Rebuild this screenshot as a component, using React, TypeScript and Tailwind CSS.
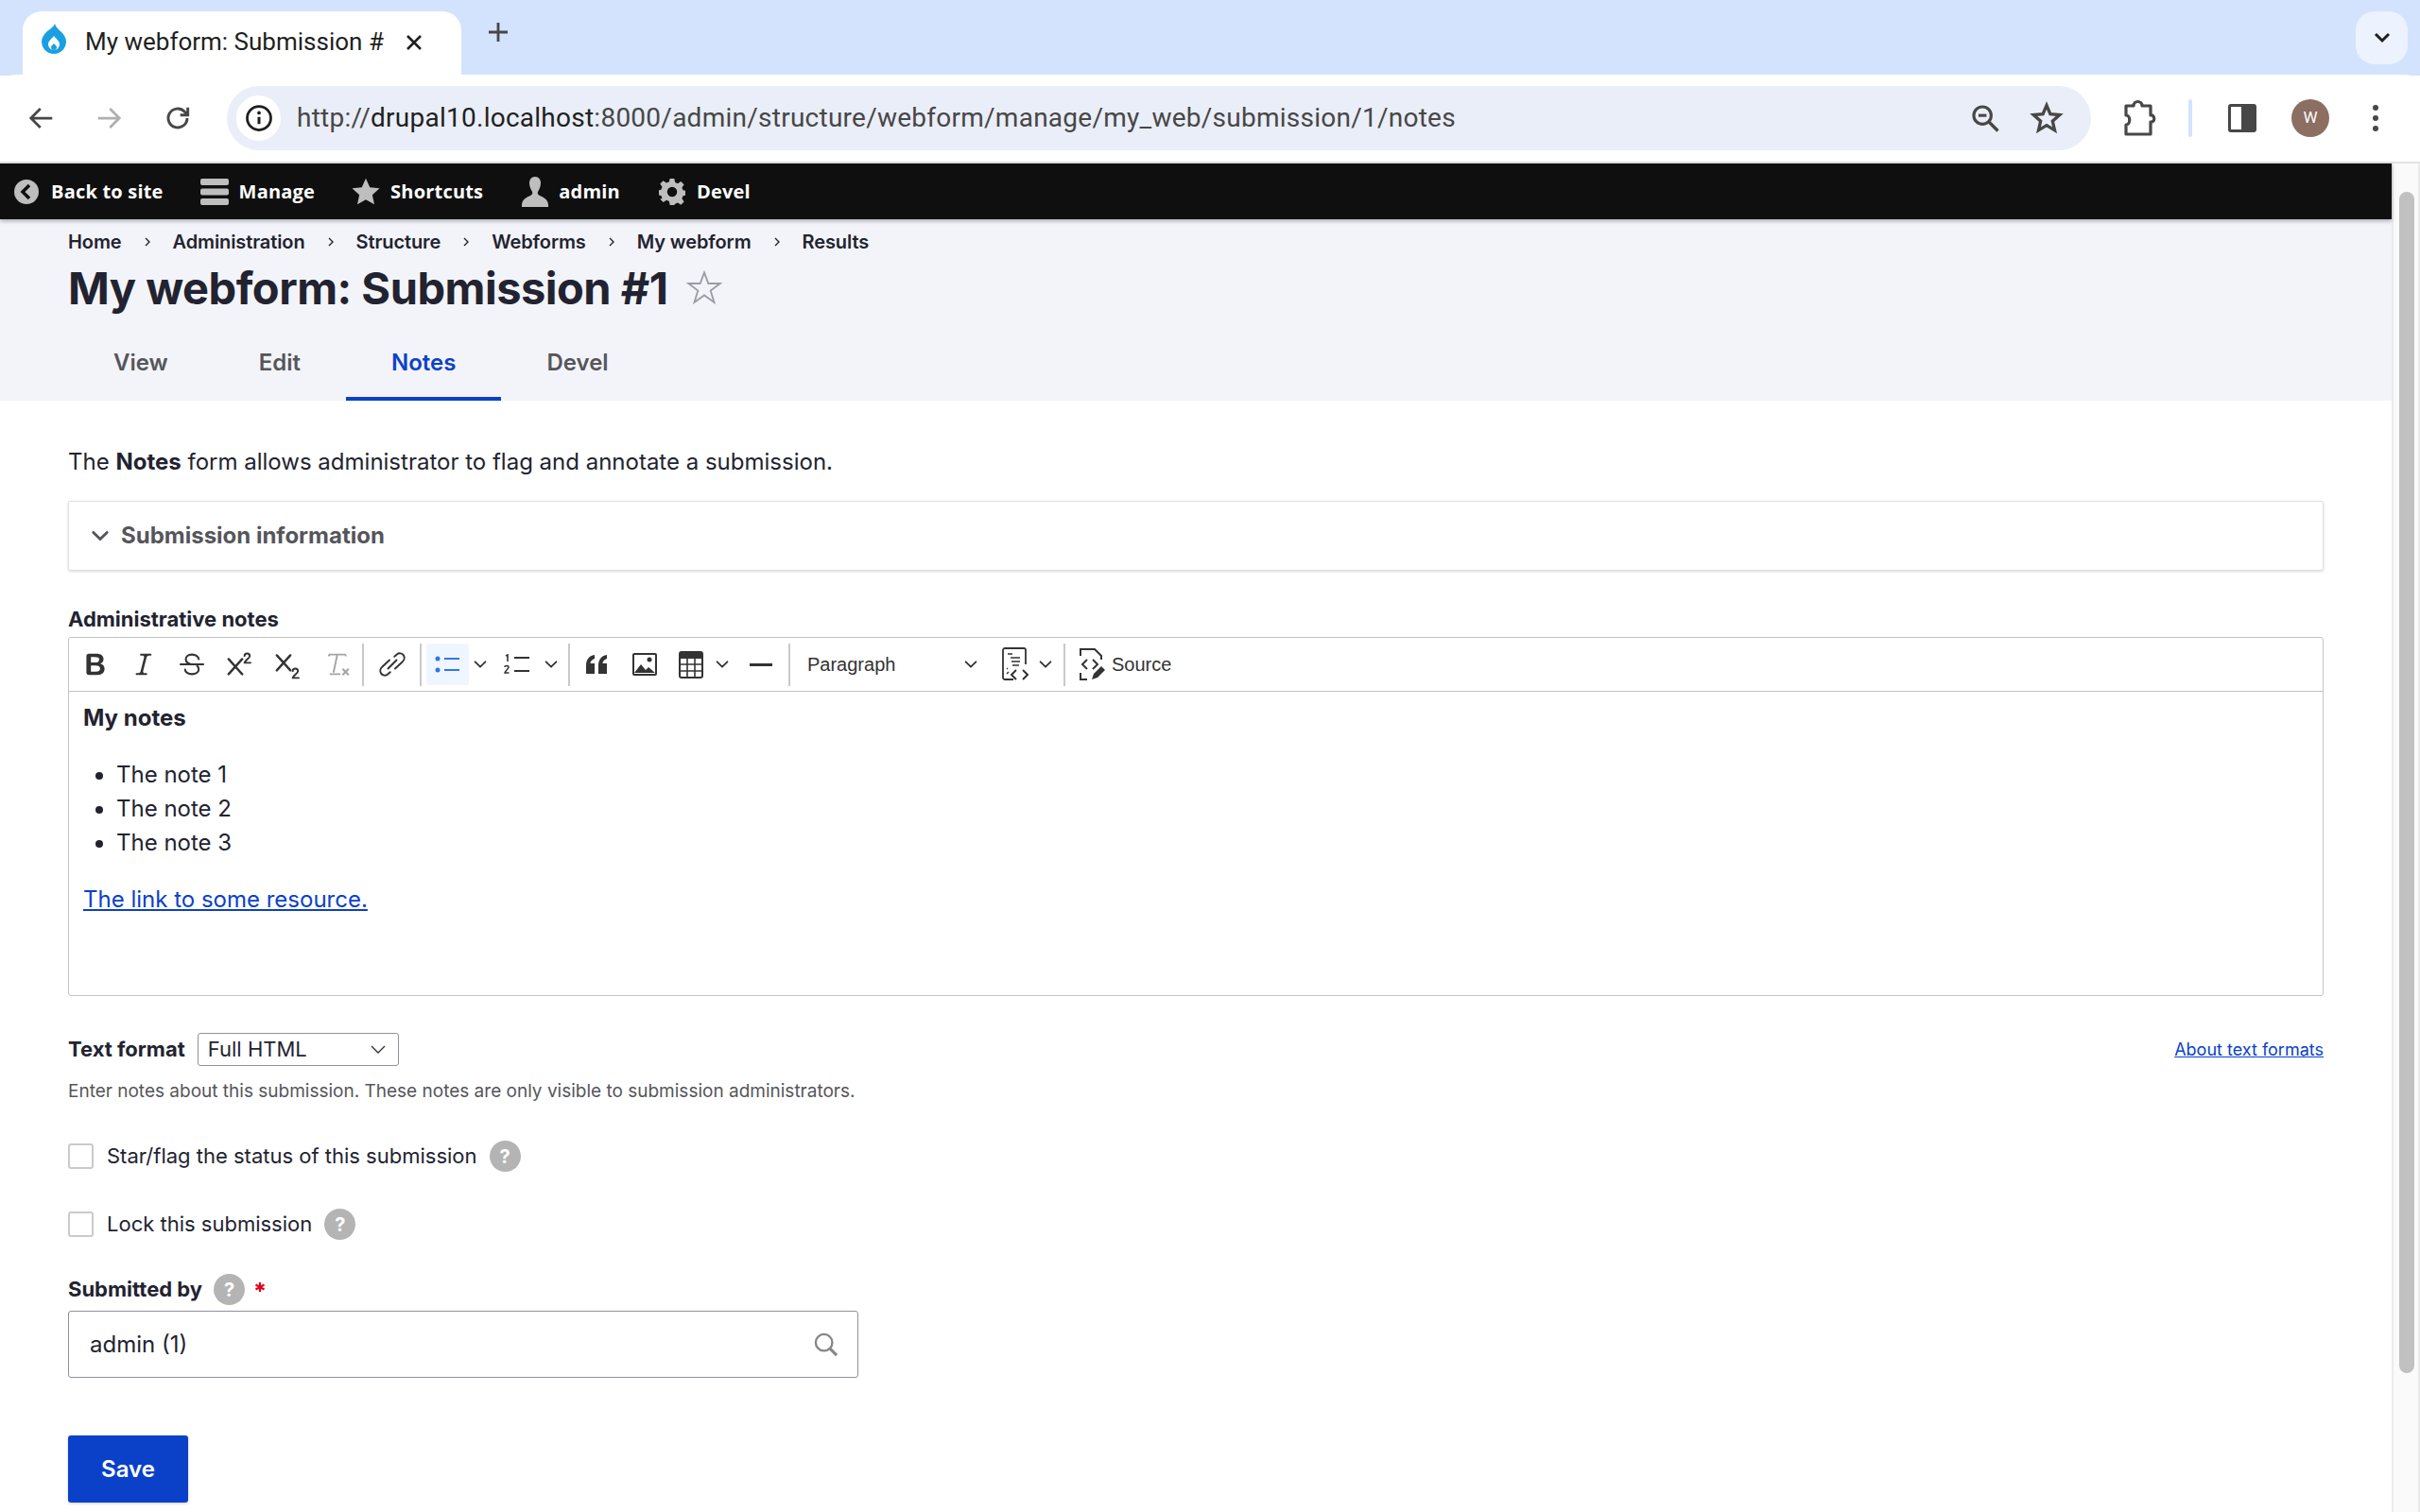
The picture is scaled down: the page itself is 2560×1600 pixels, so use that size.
import React from "react";

const Ic = ({ w = 32, h = 32, vb = "0 0 20 20", className = "", children }: { w?: number; h?: number; vb?: string; className?: string; children: React.ReactNode }) => (
  <svg width={w} height={h} viewBox={vb} className={"shrink-0 " + className}>{children}</svg>
);

const Chev = ({ w = 20, c = "#333", sw = 2 }: { w?: number; c?: string; sw?: number }) => (
  <svg width={w} height={w} viewBox="0 0 20 20" className="shrink-0"><path d="M4 7l6 6 6-6" fill="none" stroke={c} strokeWidth={sw} strokeLinecap="round" strokeLinejoin="round" /></svg>
);

const Sep = ({ className = "" }: { className?: string }) => <div className={"w-[2px] h-[45px] bg-[#c9c9cd] shrink-0 " + className} />;

const Help = ({ className = "" }: { className?: string }) => (
  <span className={"w-[33px] h-[33px] rounded-full bg-[#b4b4b4] text-white font-bold text-[20px] flex items-center justify-center shrink-0 " + className}>?</span>
);

const Crumb = () => (
  <svg width="8" height="12" viewBox="0 0 8 12" className="mx-[23px] shrink-0"><path d="M2 2l4 4-4 4" fill="none" stroke="#222330" strokeWidth="1.4" /></svg>
);

const ToolbarItem = ({ icon, label, className = "" }: { icon: React.ReactNode; label: string; className?: string }) => (
  <div className={"flex items-center " + className}>
    {icon}
    <span className="text-white font-bold text-[20px] font-['Open_Sans',sans-serif] tracking-[0.2px]">{label}</span>
  </div>
);

export default function App() {
  return (
    <div className="w-[2560px] h-[1600px] overflow-hidden flex flex-col bg-white font-['Inter',sans-serif] text-[#222330]">
      {/* Tab strip */}
      <div className="h-[80px] bg-[#d3e3fd] flex items-end shrink-0">
        <div className="ml-[24px] w-[464px] h-[68px] bg-white rounded-t-[20px] flex items-start pt-[12px]">
          <svg width="26" height="32" viewBox="0 0 26 32" className="ml-[20px] mt-[1px] shrink-0">
            <path d="M14 0c1 4 4 6 6.500 8.500C23.500 11.500 26 15 26 19c0 7-5.800 13-13 13S0 26 0 19c0-4 2.500-7.500 5.500-10.500C8.500 6 12.500 4 14 0z" fill="#1a9fe3" />
            <path d="M13 13c-2 3-6 5-6 9a6 6 0 0 0 12 0c0-4-4-6-6-9z" fill="#fff" />
            <path d="M13 21c-1 1.500-3 2.200-3 4a3 3 0 0 0 6 0c0-1.800-2-2.500-3-4z" fill="#1a9fe3" />
          </svg>
          <span className="ml-[20px] font-['Roboto',sans-serif] text-[26px] leading-[40px] text-[#1f1f1f] whitespace-nowrap w-[318px] overflow-hidden">My webform: Submission #1 <span className="text-[#c4c7c5]">|</span></span>
          <svg width="18" height="18" viewBox="0 0 18 18" className="ml-[21px] mt-[12px] shrink-0"><path d="M2 2l14 14M16 2L2 16" stroke="#1f1f1f" strokeWidth="2.600" /></svg>
        </div>
        <svg width="22" height="22" viewBox="0 0 22 22" className="ml-[28px] mb-[35px] shrink-0"><path d="M11 1v20M1 11h20" stroke="#474747" strokeWidth="2.800" /></svg>
        <div className="ml-auto mr-[13px] mb-[12px] w-[55px] h-[56px] rounded-[20px] bg-[#ecf2fe] flex items-center justify-center">
          <svg width="18" height="14" viewBox="0 0 18 14"><path d="M2 3l7 7 7-7" fill="none" stroke="#1f1f1f" strokeWidth="3" /></svg>
        </div>
      </div>
      {/* Browser toolbar */}
      <div className="h-[92px] bg-white flex items-center shrink-0 rounded-t-[16px] -mt-px">
        <svg width="30" height="30" viewBox="0 0 24 24" className="ml-[29px] shrink-0"><path d="M21 12H4M11 4l-8 8 8 8" fill="none" stroke="#474747" strokeWidth="2.200" /></svg>
        <svg width="30" height="30" viewBox="0 0 24 24" className="ml-[41px] shrink-0"><path d="M3 12h17M13 4l8 8-8 8" fill="none" stroke="#b0b0b0" strokeWidth="2.200" /></svg>
        <svg width="32" height="32" viewBox="0 0 24 24" className="ml-[42px] shrink-0"><path d="M19.500 12a7.500 7.500 0 1 1-2.200-5.300L20 9.500M20 3.500v6h-6" fill="none" stroke="#474747" strokeWidth="2.200" /></svg>
        <div className="ml-[36px] w-[1972px] h-[68px] rounded-full bg-[#eaeef8] flex items-center">
          <div className="ml-[10px] w-[47px] h-[48px] rounded-full bg-white flex items-center justify-center shrink-0">
            <svg width="30" height="30" viewBox="0 0 24 24"><circle cx="12" cy="12" r="10" fill="none" stroke="#1f1f1f" strokeWidth="2.200" /><path d="M12 11v6" stroke="#1f1f1f" strokeWidth="2.400" /><circle cx="12" cy="7.500" r="1.500" fill="#1f1f1f" /></svg>
          </div>
          <span className="ml-[17px] font-['Roboto',sans-serif] text-[28px] tracking-[0.25px] text-[#474747] whitespace-nowrap">http://<span className="text-[#1f1f1f]">drupal10.localhost</span>:8000/admin/structure/webform/manage/my_web/submission/1/notes</span>
          <svg width="34" height="34" viewBox="0 0 24 24" className="ml-auto shrink-0"><circle cx="10" cy="10" r="6.500" fill="none" stroke="#474747" strokeWidth="2.200" /><path d="M7 10h6" stroke="#474747" strokeWidth="2.200" /><path d="M15 15l6.500 6.500" stroke="#474747" strokeWidth="2.400" /></svg>
          <svg width="36" height="36" viewBox="0 0 24 24" className="ml-[30px] mr-[29px] shrink-0"><path d="M12 3l2.600 6.100 6.600.6-5 4.400 1.500 6.500L12 17.100 6.300 20.600l1.500-6.500-5-4.400 6.600-.6z" fill="none" stroke="#474747" strokeWidth="2.200" strokeLinejoin="miter" /></svg>
        </div>
        <svg width="36" height="40" viewBox="0 0 36 40" className="ml-[34px] shrink-0"><path d="M3 7h8c0-6 9-6 9 0h9v10c5-1 5 8 0 7v13H3V27c5 0 5-10 0-10z" fill="none" stroke="#474747" strokeWidth="3.200" strokeLinejoin="round" /></svg>
        <div className="ml-[33px] w-[4px] h-[40px] rounded bg-[#d3e3fd] shrink-0" />
        <div className="ml-[38px] w-[30px] h-[30px] rounded-[3px] border-[3px] border-[#474747] flex shrink-0"><div className="ml-auto w-[13px] bg-[#474747]" /></div>
        <div className="ml-[37px] w-[40px] h-[40px] rounded-full bg-[#8d6e63] text-white text-[17px] flex items-center justify-center font-['Roboto',sans-serif] shrink-0">W</div>
        <div className="ml-[46px] flex flex-col gap-[5px] shrink-0">
          <div className="w-[6px] h-[6px] rounded-full bg-[#474747]" />
          <div className="w-[6px] h-[6px] rounded-full bg-[#474747]" />
          <div className="w-[6px] h-[6px] rounded-full bg-[#474747]" />
        </div>
      </div>
      <div className="h-[2px] bg-[#e3e3e3] shrink-0" />
      {/* Page + scrollbar */}
      <div className="flex flex-1 min-h-0">
        <div className="w-[2530px] shrink-0 flex flex-col">
          {/* Admin toolbar */}
          <div className="h-[59px] bg-[#0f0f0f] flex items-center shrink-0 shadow-[0_2px_4px_rgba(0,0,0,0.3)] relative">
            <ToolbarItem
              className="ml-[15px]"
              label="Back to site"
              icon={<svg width="26" height="26" viewBox="0 0 26 26" className="mr-[13px] shrink-0"><circle cx="13" cy="13" r="13" fill="#bebebe" /><path d="M16 6l-7 7 7 7" fill="none" stroke="#0f0f0f" strokeWidth="3.500" /></svg>}
            />
            <ToolbarItem
              className="ml-[39px]"
              label="Manage"
              icon={<svg width="30" height="28" viewBox="0 0 30 28" className="mr-[11px] shrink-0"><rect width="30" height="7" rx="2" fill="#bebebe" /><rect y="10.500" width="30" height="7" rx="2" fill="#bebebe" /><rect y="21" width="30" height="7" rx="2" fill="#bebebe" /></svg>}
            />
            <ToolbarItem
              className="ml-[39px]"
              label="Shortcuts"
              icon={<svg width="30" height="30" viewBox="0 0 24 24" className="mr-[11px] shrink-0"><path d="M12 .5l3.400 7.600 8.200.9-6.100 5.500 1.700 8.100-7.200-4.100-7.200 4.100 1.700-8.100L.4 9l8.200-.9z" fill="#bebebe" /></svg>}
            />
            <ToolbarItem
              className="ml-[41px]"
              label="admin"
              icon={<svg width="28" height="32" viewBox="0 0 28 32" className="mr-[11px] shrink-0"><path d="M14 0c4 0 6 3 6 7 0 4-2 7-3 9-.7 1.500 0 3 2 4 4 2 9 4 9 10v2H0v-2c0-6 5-8 9-10 2-1 2.700-2.500 2-4-1-2-3-5-3-9 0-4 2-7 6-7z" fill="#bebebe" /></svg>}
            />
            <ToolbarItem
              className="ml-[41px]"
              label="Devel"
              icon={<svg width="28" height="30" viewBox="0 0 24 24" className="mr-[12px] shrink-0"><path d="M10 0h4l.7 3.400 2.400 1 2.900-1.900 2.800 2.800-1.900 2.900 1 2.400 3.100.4v4l-3.100.7-1 2.400 1.900 2.900-2.800 2.800-2.900-1.900-2.400 1L14 24h-4l-.7-3.400-2.400-1-2.900 1.900-2.800-2.800L3 17.800l-1-2.400-3-.7v-4l3-.7 1-2.400-1.900-2.900L3.900 2l2.900 1.900 2.400-1z" fill="#bebebe" /><circle cx="12" cy="12" r="4.500" fill="#0f0f0f" /></svg>}
            />
          </div>
          {/* Header */}
          <div className="bg-[#f3f4f9] h-[192px] pl-[72px] shrink-0 flex flex-col">
            <div className="flex items-center mt-[12px] text-[20px] leading-[24px] font-semibold tracking-[-0.1px] text-[#222330]">
              <span>Home</span><Crumb /><span>Administration</span><Crumb /><span>Structure</span><Crumb /><span>Webforms</span><Crumb /><span>My webform</span><Crumb /><span>Results</span>
            </div>
            <div className="flex items-center mt-[8px] h-[58px]">
              <h1 className="text-[47px] leading-[58px] font-bold tracking-[-0.5px] text-[#222330] whitespace-nowrap">My webform: Submission #1</h1>
              <svg width="40" height="40" viewBox="0 0 24 24" className="ml-[18px] shrink-0"><path d="M12 2l2.600 7h7.400l-6 4.500 2.300 7.500L12 16.500 5.700 21 8 13.500 2 9h7.400z" fill="none" stroke="#9a9ca6" strokeWidth="1.100" /></svg>
            </div>
            <div className="flex mt-[auto] h-[76px] text-[24px] font-semibold text-[#55565b]">
              <div className="px-[48px] flex items-center pb-[4px]">View</div>
              <div className="px-[48px] flex items-center pb-[4px]">Edit</div>
              <div className="px-[48px] flex items-center pb-[0px] border-b-[4px] border-[#0b41c9] text-[#0b41c9]">Notes</div>
              <div className="px-[48px] flex items-center pb-[4px]">Devel</div>
            </div>
          </div>
          {/* Content */}
          <div className="pl-[72px] pr-[72px] flex flex-col flex-1 min-h-0">
            <p className="mt-[49px] text-[24px] leading-[32px] text-[#222330]">The <b className="font-bold">Notes</b> form allows administrator to flag and annotate a submission.</p>
            <div className="mt-[25px] h-[74px] border border-[#dedfe4] rounded-[2px] shadow-[0_1px_3px_rgba(0,0,0,0.15)] flex items-center pl-[21px] shrink-0">
              <Chev w={24} c="#55565b" sw={2.400} />
              <span className="ml-[10px] text-[24px] font-bold text-[#55565b]">Submission information</span>
            </div>
            <label className="mt-[37px] text-[22px] leading-[28px] font-bold text-[#222330]">Administrative notes</label>
            <div className="mt-[5px] h-[380px] border border-[#c4c4c4] rounded-[3px] flex flex-col shrink-0">
              {/* Editor toolbar */}
              <div className="h-[57px] border-b border-[#c4c4c4] flex items-center shrink-0">
                <Ic w={32} h={32} className="ml-[12px]"><path fill="#333" d="M10.187 17H5.773c-.637 0-1.092-.138-1.364-.415-.273-.277-.409-.718-.409-1.323V4.738c0-.617.14-1.062.419-1.332.279-.27.73-.406 1.354-.406h4.68c.69 0 1.288.041 1.793.124.506.083.96.242 1.36.478.341.197.644.447.906.75a3.262 3.262 0 0 1 .808 2.162c0 1.401-.722 2.426-2.167 3.075C15.05 10.175 16 11.315 16 13.01a3.756 3.756 0 0 1-2.296 3.504 6.1 6.1 0 0 1-1.517.377c-.571.073-1.238.11-2 .11zm-.217-6.217H7v4.087h3.069c1.977 0 2.965-.69 2.965-2.072 0-.707-.256-1.22-.768-1.537-.512-.319-1.277-.478-2.296-.478zM7 5.130v3.619h2.606c.729 0 1.292-.067 1.690-.2a1.600 1.600 0 0 0 .91-.765c.165-.267.247-.566.247-.897 0-.707-.26-1.176-.778-1.409-.519-.232-1.310-.348-2.375-.348H7z" /></Ic>
                <Ic w={32} h={32} className="ml-[19px]"><path fill="#333" d="m9.586 14.633.021.004c-.036.335.095.655.393.962.082.083.173.15.274.201h1.474a.6.6 0 1 1 0 1.200H5.304a.6.6 0 0 1 0-1.200h1.150c.474-.07.809-.182 1.005-.334.157-.122.291-.32.404-.597l2.416-9.550a1.053 1.053 0 0 0-.281-.823 1.120 1.120 0 0 0-.442-.296H8.150a.6.6 0 0 1 0-1.200h6.443a.6.6 0 1 1 0 1.200h-1.195c-.376.056-.65.155-.823.296-.215.175-.423.439-.623.79l-2.366 9.347z" /></Ic>
                <Ic w={32} h={32} className="ml-[19px]"><path d="M14.500 6.500c0-1.500-2-3-4.500-3s-4 1.300-4 3c0 1.300.8 2.500 2.500 3M2.500 10h15M13.500 11c.7.600 1 1.500 1 2.300 0 1.900-1.900 3.200-4.500 3.200S5.500 15 5.500 13.500" fill="none" stroke="#333" strokeWidth="1.300" strokeLinecap="round" /></Ic>
                <Ic w={32} h={32} className="ml-[18px]"><path d="M3 6.500l9 10M12 6.500l-9 10" stroke="#333" strokeWidth="1.500" strokeLinecap="round" /><path d="M13.500 4.500c0-2.200 3.500-2.200 3.500 0 0 1.500-2.800 2.500-3.500 4.500H17.500" fill="none" stroke="#333" strokeWidth="1.200" strokeLinecap="round" strokeLinejoin="round" /></Ic>
                <Ic w={32} h={32} className="ml-[19px]"><path d="M3 4l9 10M12 4l-9 10" stroke="#333" strokeWidth="1.500" strokeLinecap="round" /><path d="M13.500 14.500c0-2.200 3.500-2.200 3.500 0 0 1.500-2.800 2.500-3.500 4.500H17.500" fill="none" stroke="#333" strokeWidth="1.200" strokeLinecap="round" strokeLinejoin="round" /></Ic>
                <Ic w={32} h={32} className="ml-[20px]"><path d="M5 3.500h11M10.500 3.500l-2.500 12M5.500 16.500h7M5 3.500v1.200M16 3.500v1.200" stroke="#a4a4a4" strokeWidth="1.200" fill="none" /><path d="M14 13l4 4M18 13l-4 4" stroke="#a4a4a4" strokeWidth="1.300" /></Ic>
                <Sep className="ml-[11px]" />
                <Ic w={30} h={30} className="ml-[15px]"><path d="M11.500 4.500l1.700-1.500c1.600-1.300 3.700-.9 4.700.6 1 1.500.6 3.500-.9 4.700L12 13M8.500 15.500l-1.700 1.500c-1.600 1.300-3.700.9-4.700-.6-1-1.500-.6-3.500.9-4.700L8 7M7 13l6-6" fill="none" stroke="#333" strokeWidth="1.300" strokeLinecap="round" transform="translate(0 0)" /></Ic>
                <Sep className="ml-[14px]" />
                <div className="ml-[5px] w-[45px] h-[44px] rounded-[3px] bg-[#f0f6ff] flex items-center justify-center shrink-0">
                  <svg width="28" height="20" viewBox="0 0 28 20"><circle cx="3" cy="4" r="2.500" fill="#2c77f0" /><circle cx="3" cy="16" r="2.500" fill="#2c77f0" /><path d="M10 4h16M10 16h16" stroke="#2c77f0" strokeWidth="2" /></svg>
                </div>
                <div className="ml-[3px]"><Chev w={18} c="#333" /></div>
                <svg width="28" height="22" viewBox="0 0 28 22" className="ml-[16px] shrink-0"><path d="M2 2l2-1v7" fill="none" stroke="#333" strokeWidth="1.600" /><path d="M1 14c0-2 4-2 4 0 0 1.800-3 3-4 6h4.500" fill="none" stroke="#333" strokeWidth="1.500" /><path d="M11 4h16M11 18h16" stroke="#333" strokeWidth="2" /></svg>
                <div className="ml-[13px]"><Chev w={18} c="#333" /></div>
                <Sep className="ml-[9px]" />
                <svg width="24" height="20" viewBox="0 0 24 20" className="ml-[16px] shrink-0"><path fill="#333" d="M1 20V11C1 5 4 1 10 0v4C7 5 5.500 7 5.500 9H10v11zM14 20V11c0-6 3-10 9-11v4c-3 1-4.500 3-4.500 5H23v11z" /></svg>
                <svg width="26" height="24" viewBox="0 0 26 24" className="ml-[26px] shrink-0"><rect x="1" y="1" width="24" height="22" rx="1" fill="none" stroke="#333" strokeWidth="2" /><circle cx="18" cy="7" r="2.500" fill="#333" /><path d="M2 21l7-9 5 6 3-3 7 6z" fill="#333" /></svg>
                <svg width="26" height="29" viewBox="0 0 26 29" className="ml-[23px] shrink-0"><rect x="1" y="1" width="24" height="27" rx="2" fill="none" stroke="#333" strokeWidth="2" /><rect x="1" y="1" width="24" height="7" fill="#333" /><path d="M1 14h24M1 21h24M9 8v20M17 8v20" stroke="#333" strokeWidth="1.600" /></svg>
                <div className="ml-[11px]"><Chev w={18} c="#333" /></div>
                <div className="ml-[20px] w-[24px] h-[3px] bg-[#333] shrink-0" />
                <Sep className="ml-[17px]" />
                <span className="ml-[18px] w-[90px] font-['Liberation_Sans',sans-serif] text-[20px] text-[#333]">Paragraph</span>
                <div className="ml-[74px]"><Chev w={18} c="#333" /></div>
                <svg width="28" height="36" viewBox="0 0 28 36" className="ml-[24px] shrink-0"><path d="M12 34H3a2 2 0 0 1-2-2V3a2 2 0 0 1 2-2h20a2 2 0 0 1 2 2v15" fill="none" stroke="#333" strokeWidth="1.800" /><path d="M6 7h5M9 11h10M10 15h9M11 19h7M7 26l-2 2M6 22l-1 1" stroke="#333" strokeWidth="1.400" /><path d="M15 24l-5 5 5 5M22 24l5 5-5 5" fill="none" stroke="#333" strokeWidth="2" /></svg>
                <div className="ml-[9px]"><Chev w={18} c="#333" /></div>
                <Sep className="ml-[10px]" />
                <svg width="30" height="36" viewBox="0 0 30 36" className="ml-[14px] shrink-0"><path d="M9 34H2v-7M2 9V2h15l7 7v4" fill="none" stroke="#333" strokeWidth="2" /><path d="M9 13l-5 5 5 5M15 13l5 5-5 5" fill="none" stroke="#333" strokeWidth="2" /><path d="M14 34l2-6 8-8 4 4-8 8z" fill="#333" /></svg>
                <span className="ml-[5px] font-['Liberation_Sans',sans-serif] text-[20px] text-[#333]">Source</span>
              </div>
              {/* Editor body */}
              <div className="pl-[15px] pt-[10px] text-[24px] leading-[36px] text-[#222330]">
                <p className="font-bold">My notes</p>
                <ul className="mt-[24px] list-disc pl-[35px]">
                  <li>The note 1</li>
                  <li>The note 2</li>
                  <li>The note 3</li>
                </ul>
                <p className="mt-[24px]"><a className="text-[#0b41c9] underline">The link to some resource.</a></p>
              </div>
            </div>
            {/* Text format */}
            <div className="mt-[39px] flex items-center h-[35px] shrink-0">
              <span className="text-[22px] font-bold text-[#222330]">Text format</span>
              <div className="ml-[13px] w-[213px] h-[35px] border border-[#8e929c] rounded-[3px] flex items-center pl-[10px] text-[22px]">
                Full HTML
                <svg width="16" height="10" viewBox="0 0 16 10" className="ml-auto mr-[13px]"><path d="M1 1l7 7 7-7" fill="none" stroke="#333" strokeWidth="1.400" /></svg>
              </div>
              <a className="ml-auto text-[#0b41c9] underline text-[18px]">About text formats</a>
            </div>
            <p className="mt-[15px] text-[19px] leading-[24px] text-[#55565b]">Enter notes about this submission. These notes are only visible to submission administrators.</p>
            <div className="mt-[40px] flex items-center h-[33px] shrink-0">
              <div className="w-[27px] h-[27px] border-2 border-[#c9cad0] rounded-[3px] shrink-0" />
              <span className="ml-[14px] text-[22px] text-[#222330]">Star/flag the status of this submission</span>
              <Help className="ml-[13px]" />
            </div>
            <div className="mt-[39px] flex items-center h-[33px] shrink-0">
              <div className="w-[27px] h-[27px] border-2 border-[#c9cad0] rounded-[3px] shrink-0" />
              <span className="ml-[14px] text-[22px] text-[#222330]">Lock this submission</span>
              <Help className="ml-[13px]" />
            </div>
            <div className="mt-[36px] flex items-center h-[33px] shrink-0">
              <span className="text-[22px] font-bold text-[#222330]">Submitted by</span>
              <Help className="ml-[12px]" />
              <svg width="12" height="12" viewBox="0 0 12 12" className="ml-[10px] -mt-[6px] shrink-0"><path d="M6 1v10M1.500 3.500l9 5M10.500 3.500l-9 5" stroke="#e3001b" strokeWidth="2.200" /></svg>
            </div>
            <div className="mt-[6px] w-[836px] h-[71px] border border-[#8e929c] rounded-[3px] flex items-center pl-[22px] pr-[19px] text-[24px] shrink-0">
              admin (1)
              <svg width="28" height="28" viewBox="0 0 24 24" className="ml-auto"><circle cx="10" cy="10" r="7.500" fill="none" stroke="#868686" strokeWidth="2" /><path d="M15.500 15.500l6 6" stroke="#868686" strokeWidth="2.600" /></svg>
            </div>
            <button className="mt-[61px] w-[127px] h-[71px] rounded-[3px] bg-[#0b41c9] text-white font-semibold text-[24px] shadow-[0_1px_3px_rgba(0,0,0,0.2)] shrink-0">Save</button>
          </div>
        </div>
        {/* Scrollbar */}
        <div className="w-[30px] shrink-0 bg-[#fafafa] border-l-2 border-r-2 border-[#ebebeb] pl-[6px] pt-[30px]">
          <div className="w-[16px] h-[1250px] rounded-full bg-[#c1c1c1]" />
        </div>
      </div>
    </div>
  );
}
